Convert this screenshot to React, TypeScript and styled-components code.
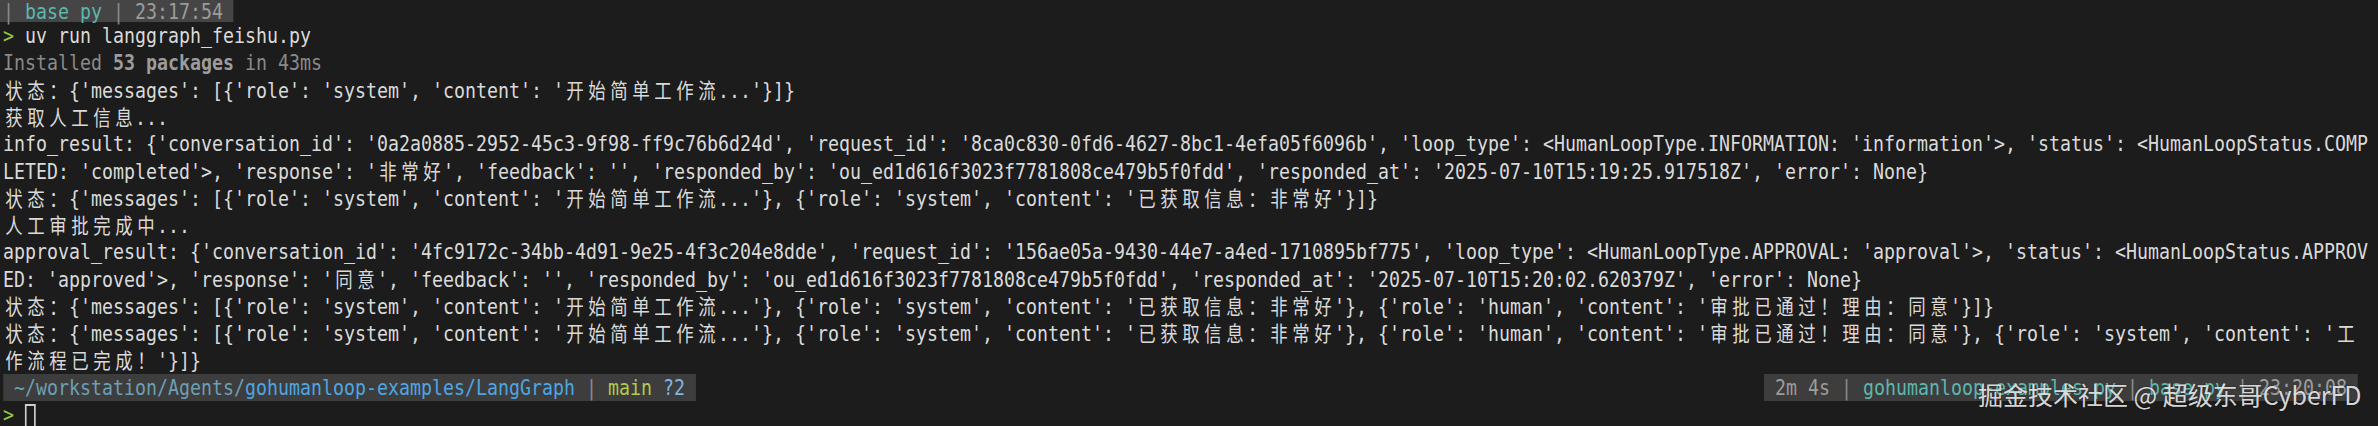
import React from "react";
import styled, { createGlobalStyle } from "styled-components";

/* Terminal cell metrics: the reference uses a tall, narrow monospace.
   We draw DejaVu Sans Mono and condense the whole screen horizontally. */
const FONT = 22;
const CELL = FONT * (1233 / 2048); // advance of DejaVu Sans Mono
const S = 11 / CELL; // target cell width of 11px
const CJK_SIZE = 21;
const CJK_PAD = 2 * CELL - CJK_SIZE;

const FG = "#dadada";
const DIM = "#8a8a8a";
const GREEN = "#93c947";
const TEAL = "#5db7ae";
const GREY = "#9c9c9c";
const PIPE = "#8a8a8a";
const PATH_DIM = "#6d9fb4";
const PATH = "#4ea6e2";
const BRANCH = "#b3c94a";
const STATUS = "#7db6e6";

const GlobalStyle = createGlobalStyle`
  html, body {
    margin: 0;
    padding: 0;
    background: #1c1c1c;
    overflow: hidden;
  }
`;

const Page = styled.div`
  position: relative;
  width: 2378px;
  height: 426px;
  overflow: hidden;
  background: #1c1c1c;
`;

const Screen = styled.div`
  width: ${2378 / S}px;
  transform: scaleX(${S});
  transform-origin: 0 0;
  display: flex;
  flex-direction: column;
  font-family: "DejaVu Sans Mono", "Liberation Mono", monospace;
  font-size: ${FONT}px;
  color: ${FG};
  white-space: pre;
`;

const TopBar = styled.div`
  align-self: flex-start;
  box-sizing: border-box;
  height: 22px;
  padding: 2px ${10 / S}px 0 ${3 / S}px;
  background: #454545;
  line-height: 20px;
`;

const Output = styled.div`
  display: flex;
  flex-direction: column;
  padding-left: ${3 / S}px;
`;

const Row = styled.div`
  height: 27px;
  line-height: 27px;
`;

const PromptRow = styled.div`
  display: flex;
  justify-content: space-between;
  align-items: stretch;
  height: 27px;
  line-height: 27px;
  margin-top: 1px;
`;

const PromptBar = styled.div<{ $side: "left" | "right" }>`
  background: #3d3d3d;
  margin-left: ${(p) => (p.$side === "left" ? 3 / S : 0)}px;
  margin-right: ${(p) => (p.$side === "right" ? 20 / S : 0)}px;
`;

const InputRow = styled.div`
  height: 27px;
  line-height: 27px;
  padding-left: ${3 / S}px;
  display: flex;
  align-items: flex-start;
`;

const Tone = styled.span<{ $c?: string; $b?: boolean }>`
  color: ${(p) => p.$c ?? "inherit"};
  font-weight: ${(p) => (p.$b ? 700 : 400)};
`;

const Wide = styled.span`
  font-family: "Noto Sans CJK SC", sans-serif;
  font-size: ${CJK_SIZE}px;
  letter-spacing: ${CJK_PAD}px;
  padding-left: ${CJK_PAD / 2}px;
  margin-right: -${CJK_PAD / 2}px;
`;

const Cursor = styled.span`
  display: inline-block;
  box-sizing: border-box;
  width: ${CELL}px;
  height: 26px;
  margin-top: 3px;
  margin-left: ${CELL}px;
  border: 2px solid #cfcfcf;
`;

const Watermark = styled.div`
  position: absolute;
  left: 1978px;
  top: 379px;
  font-family: "Noto Sans CJK SC", "Noto Sans", sans-serif;
  font-size: 25px;
  line-height: 30px;
  color: rgba(240, 240, 240, 0.9);
  white-space: nowrap;
  text-shadow: 0 0 2px rgba(0, 0, 0, 0.45);
`;

type Seg = { t: string; c?: string; b?: boolean };

const CJK_RE = /([\u2E80-\u9FFF\uFF00-\uFFEF\u3000-\u303F]+)/;

function renderText(t: string) {
  return t
    .split(CJK_RE)
    .map((part, i) => (i % 2 === 1 ? <Wide key={i}>{part}</Wide> : part));
}

function Segs({ segs }: { segs: Seg[] }) {
  return (
    <>
      {segs.map((s, i) =>
        s.c || s.b ? (
          <Tone key={i} $c={s.c} $b={s.b}>
            {renderText(s.t)}
          </Tone>
        ) : (
          <React.Fragment key={i}>{renderText(s.t)}</React.Fragment>
        )
      )}
    </>
  );
}

const START = "状态：{'messages': [{'role': 'system', 'content': '开始简单工作流...'}";
const INFO = "{'role': 'system', 'content': '已获取信息：非常好'}";
const APPROVE = "{'role': 'human', 'content': '审批已通过！理由：同意'}";

const lines: Seg[][] = [
  [{ t: ">", c: GREEN }, { t: " uv run langgraph_feishu.py" }],
  [
    { t: "Installed ", c: DIM },
    { t: "53 packages", c: GREY, b: true },
    { t: " in 43ms", c: DIM },
  ],
  [{ t: START + "]}" }],
  [{ t: "获取人工信息..." }],
  [
    {
      t: "info_result: {'conversation_id': '0a2a0885-2952-45c3-9f98-ff9c76b6d24d', 'request_id': '8ca0c830-0fd6-4627-8bc1-4efa05f6096b', 'loop_type': <HumanLoopType.INFORMATION: 'information'>, 'status': <HumanLoopStatus.COMP",
    },
  ],
  [
    {
      t: "LETED: 'completed'>, 'response': '非常好', 'feedback': '', 'responded_by': 'ou_ed1d616f3023f7781808ce479b5f0fdd', 'responded_at': '2025-07-10T15:19:25.917518Z', 'error': None}",
    },
  ],
  [{ t: START + ", " + INFO + "]}" }],
  [{ t: "人工审批完成中..." }],
  [
    {
      t: "approval_result: {'conversation_id': '4fc9172c-34bb-4d91-9e25-4f3c204e8dde', 'request_id': '156ae05a-9430-44e7-a4ed-1710895bf775', 'loop_type': <HumanLoopType.APPROVAL: 'approval'>, 'status': <HumanLoopStatus.APPROV",
    },
  ],
  [
    {
      t: "ED: 'approved'>, 'response': '同意', 'feedback': '', 'responded_by': 'ou_ed1d616f3023f7781808ce479b5f0fdd', 'responded_at': '2025-07-10T15:20:02.620379Z', 'error': None}",
    },
  ],
  [{ t: START + ", " + INFO + ", " + APPROVE + "]}" }],
  [{ t: START + ", " + INFO + ", " + APPROVE + ", {'role': 'system', 'content': '工" }],
  [{ t: "作流程已完成！'}]}" }],
];

export default function App() {
  return (
    <Page>
      <GlobalStyle />
      <Screen>
        <TopBar>
          <Tone $c={PIPE}>|</Tone> <Tone $c={TEAL}>base py</Tone>{" "}
          <Tone $c={PIPE}>|</Tone> <Tone $c={GREY}>23:17:54</Tone>
        </TopBar>
        <Output>
          {lines.map((segs, i) => (
            <Row key={i}>
              <Segs segs={segs} />
            </Row>
          ))}
        </Output>
        <PromptRow>
          <PromptBar $side="left">
            {" "}
            <Tone $c={PATH_DIM}>~/workstation/Agents/</Tone>
            <Tone $c={PATH}>gohumanloop-examples/LangGraph</Tone>{" "}
            <Tone $c={PIPE}>|</Tone> <Tone $c={BRANCH}>main</Tone>{" "}
            <Tone $c={STATUS}>?2</Tone>{" "}
          </PromptBar>
          <PromptBar $side="right">
            {" "}
            <Tone $c={GREY}>2m 4s</Tone> <Tone $c={PIPE}>|</Tone>{" "}
            <Tone $c={TEAL}>gohumanloop-examples py</Tone>{" "}
            <Tone $c={PIPE}>|</Tone> <Tone $c={TEAL}>base py</Tone>{" "}
            <Tone $c={PIPE}>|</Tone> <Tone $c={GREY}>23:20:08</Tone>{" "}
          </PromptBar>
        </PromptRow>
        <InputRow>
          <Tone $c={GREEN}>&gt;</Tone>
          <Cursor />
        </InputRow>
      </Screen>
      <Watermark>掘金技术社区 @ 超级东哥CyberFD</Watermark>
    </Page>
  );
}
